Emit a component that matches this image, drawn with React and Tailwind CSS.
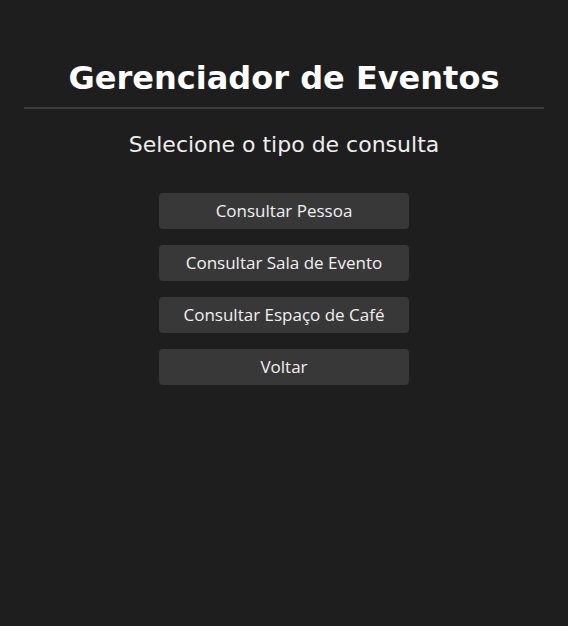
import React from "react";

export default function App() {
  const buttons = ["Consultar Pessoa", "Consultar Sala de Evento", "Consultar Espaço de Café", "Voltar"];
  return (
    <div className="min-h-screen bg-[#1e1e1e] text-white px-6 pt-[58px]" style={{ fontFamily: '"DejaVu Sans", sans-serif' }}>
      <h1 className="text-center text-[32px] font-bold leading-[40px]">Gerenciador de Eventos</h1>
      <hr className="mt-[9px] border-0 h-[2px] bg-[#3a3a3a]" />
      <p className="mt-[22px] text-center text-[22px] leading-[28px] text-[#eeeeee]">Selecione o tipo de consulta</p>
      <div className="mt-[34px] flex flex-col items-center gap-4">
        {buttons.map((b) => (
          <button
            key={b}
            className="w-[250px] h-9 rounded-[4px] bg-[#383838] text-[17px] text-[#f0f0f0]"
            style={{ fontFamily: '"Open Sans", sans-serif' }}
          >
            {b}
          </button>
        ))}
      </div>
    </div>
  );
}
